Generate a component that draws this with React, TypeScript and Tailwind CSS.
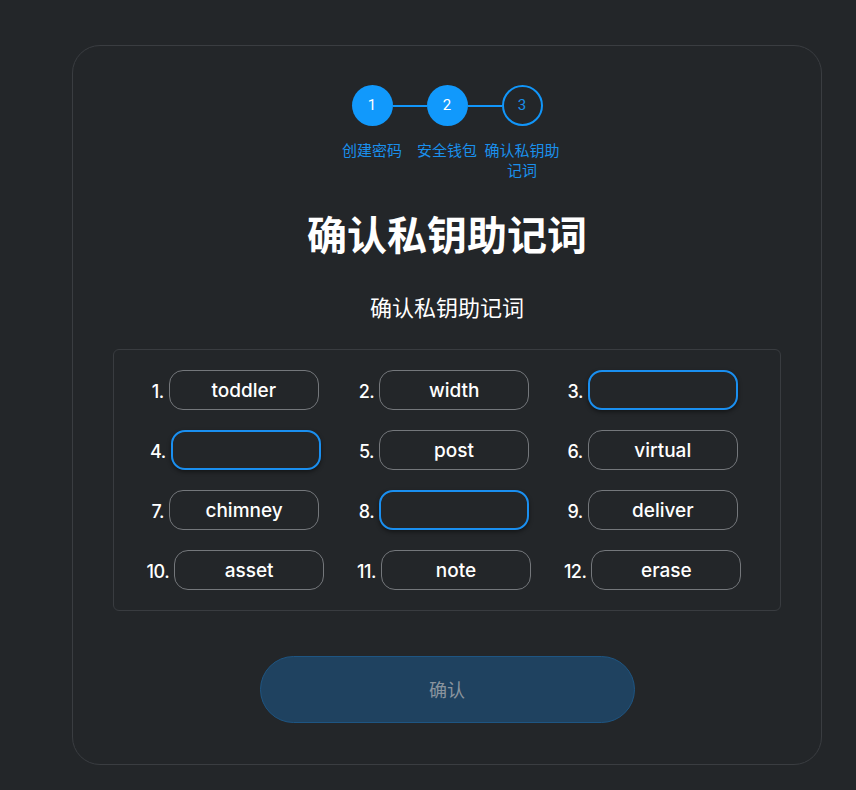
import React from "react";

const words: { n: number; w: string }[] = [
  { n: 1, w: "toddler" },
  { n: 2, w: "width" },
  { n: 3, w: "" },
  { n: 4, w: "" },
  { n: 5, w: "post" },
  { n: 6, w: "virtual" },
  { n: 7, w: "chimney" },
  { n: 8, w: "" },
  { n: 9, w: "deliver" },
  { n: 10, w: "asset" },
  { n: 11, w: "note" },
  { n: 12, w: "erase" },
];

const steps = [
  { n: 1, label: "创建密码", done: true },
  { n: 2, label: "安全钱包", done: true },
  { n: 3, label: "确认私钥助记词", done: false },
];

export default function App() {
  return (
    <div className="min-h-[790px] w-full bg-[#232629] pt-[45px] pl-[72px] font-['Noto_Sans_CJK_SC',sans-serif]">
      <div className="w-[750px] h-[720px] rounded-[28px] border border-[#3a3d41] px-[40px] pt-[39px] flex flex-col items-center">
        {/* Steps */}
        <div className="flex flex-col items-center">
          <div className="flex items-center">
            {steps.map((s, i) => (
              <React.Fragment key={s.n}>
                {i > 0 && <div className="w-[34px] h-[2px] bg-[#1196fa]" />}
                <div
                  className={
                    s.done
                      ? "w-[41px] h-[41px] rounded-full bg-[#1199fc] text-white flex items-center justify-center text-[15px] font-['Roboto',sans-serif]"
                      : "w-[41px] h-[41px] rounded-full border-2 border-[#1196fa] text-[#1a8fe8] flex items-center justify-center text-[15px] font-['Roboto',sans-serif]"
                  }
                >
                  {s.n}
                </div>
              </React.Fragment>
            ))}
          </div>
          <div className="flex mt-[14px]">
            {steps.map((s) => (
              <div key={s.n} className="w-[75px] text-center text-[15px] leading-[20px] text-[#1a90ec]">
                {s.label}
              </div>
            ))}
          </div>
        </div>

        <h1 className="mt-[29px] text-[40px] leading-[48px] font-bold text-white">确认私钥助记词</h1>
        <h2 className="mt-[34px] text-[22px] leading-[30px] text-white">确认私钥助记词</h2>

        {/* Words */}
        <div className="mt-[28px] w-full rounded-[6px] border border-[#393c40] px-[20px] py-[20px] grid grid-cols-3 gap-y-[20px] font-['Inter',sans-serif]">
          {words.map((item) => (
            <div key={item.n} className="flex items-center justify-center gap-[5px] pr-[6px]">
              <span className="pt-[2px] text-[18px] font-medium text-white tracking-[-0.5px]">{item.n}.</span>
              {item.w ? (
                <div className="w-[150px] h-[40px] pt-[3px] rounded-[14px] border border-[#74777b] flex items-center justify-center text-[19px] font-medium text-white">
                  {item.w}
                </div>
              ) : (
                <div className="w-[150px] h-[40px] rounded-[14px] border-2 border-[#1a8ff0] shadow-[0_2px_4px_rgba(0,0,0,0.45)]" />
              )}
            </div>
          ))}
        </div>

        <button className="mt-[45px] w-[375px] h-[67px] rounded-full bg-[#1f4260] border border-[#1e5582] text-[18px] text-[#8a949e]">
          确认
        </button>
      </div>
    </div>
  );
}
